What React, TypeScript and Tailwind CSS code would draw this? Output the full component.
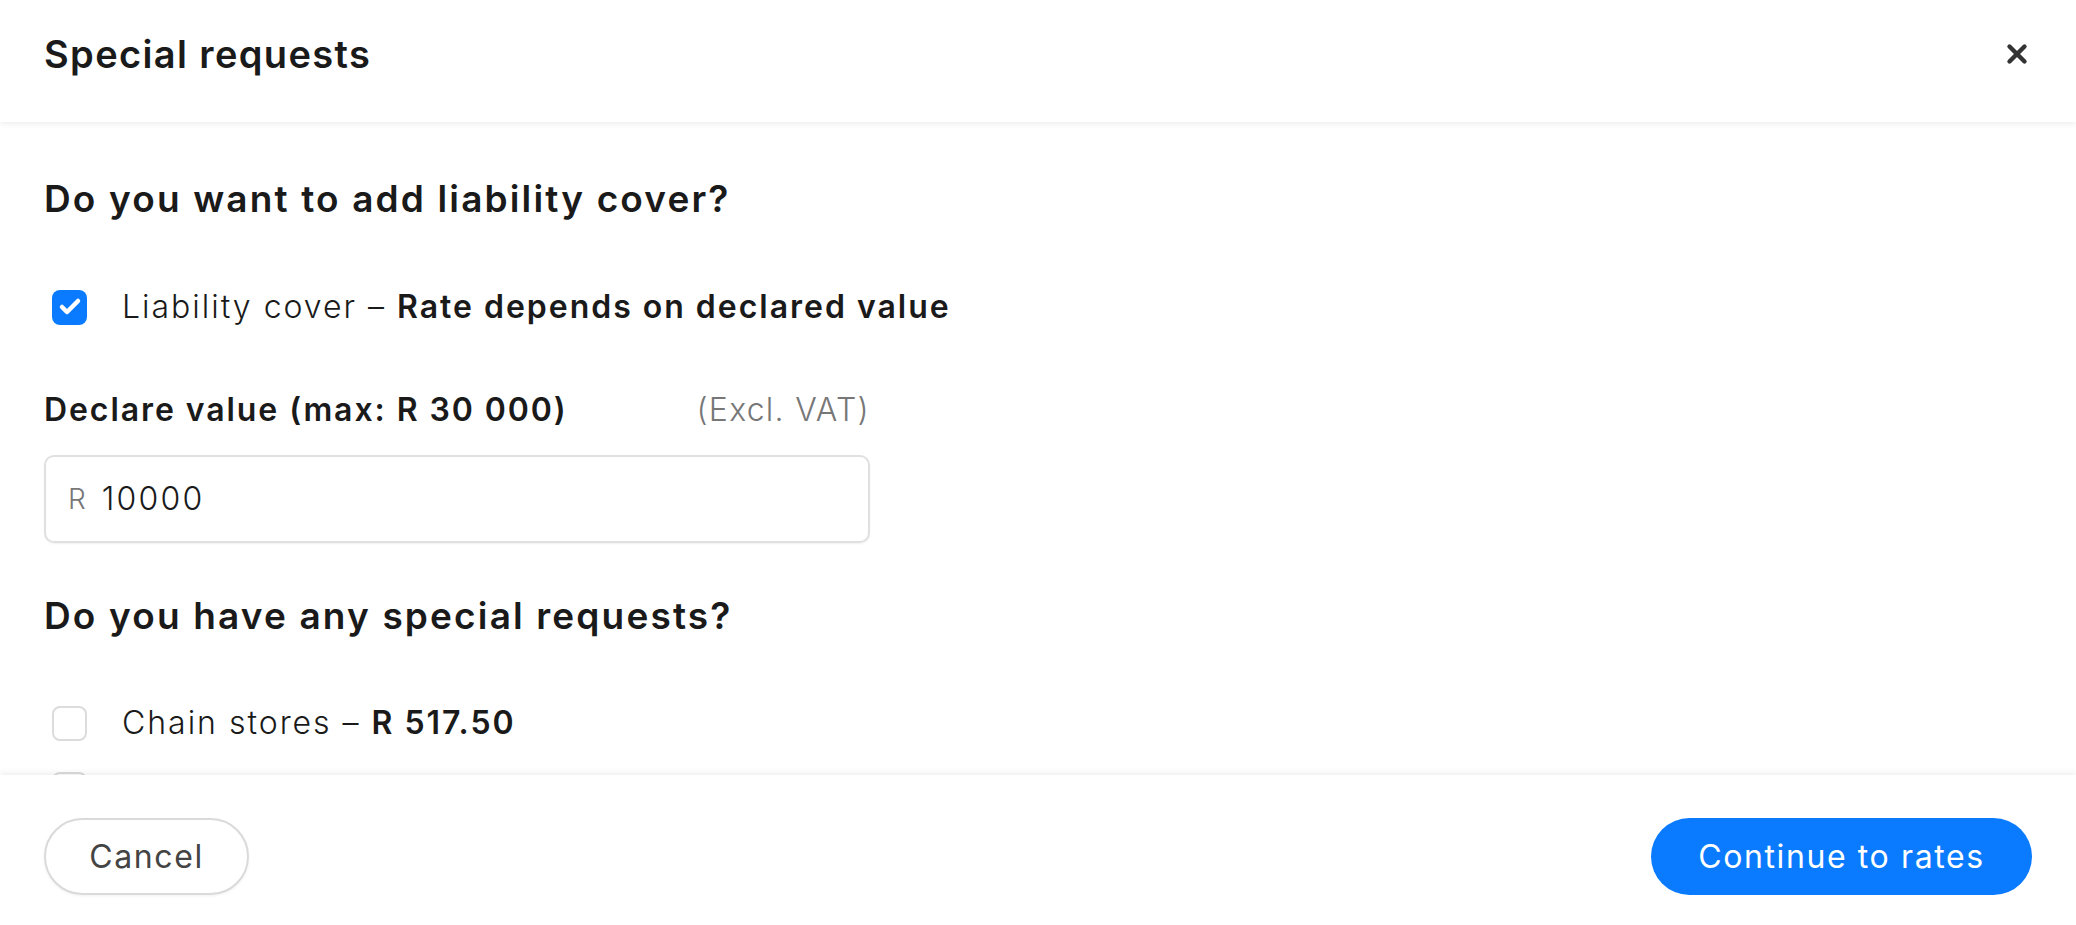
import React from 'react';
import { X, Check } from 'lucide-react';

const CheckRow = ({ checked, label, strong }: { checked?: boolean; label: string; strong: string }) => {
    return (
        <div className="flex items-center h-[44px] pl-[8px]">
            {checked ? (
                <div className="w-[35px] h-[35px] rounded-[8px] bg-[#0a7bff] flex items-center justify-center shrink-0">
                    <Check size={24} strokeWidth={4.5} className="text-white" />
                </div>
            ) : (
                <div className="w-[35px] h-[35px] rounded-[8px] border-2 border-[#dcdcdc] bg-white shrink-0" />
            )}
            <p className="ml-[35px] text-[32px] tracking-[0.062em] font-light text-[#1a1a1a] whitespace-nowrap">
                {label} – <span className="font-semibold">{strong}</span>
            </p>
        </div>
    );
};

const App = () => {
    return (
        <div className="h-[925px] w-full bg-white flex flex-col overflow-hidden font-['Inter',sans-serif] text-[#1a1a1a]">
            <div className="h-[122px] shrink-0 flex items-center justify-between px-[44px] pb-[14px] relative z-10 shadow-[0_2px_6px_rgba(0,0,0,0.07)]">
                <h1 className="text-[38px] tracking-[0.036em] font-semibold">Special requests</h1>
                <X size={30} strokeWidth={3.5} className="text-[#333]" />
            </div>

            <div className="flex-1 overflow-hidden px-[44px]">
                <h2 className="mt-[55px] h-[44px] leading-[44px] text-[37px] tracking-[0.058em] font-semibold">
                    Do you want to add liability cover?
                </h2>
                <div className="mt-[64px]">
                    <CheckRow checked label="Liability cover" strong="Rate depends on declared value" />
                </div>

                <div className="mt-[61px] w-[826px] h-[40px] flex items-center justify-between">
                    <span className="text-[32px] tracking-[0.06em] font-semibold">Declare value (max: R 30 000)</span>
                    <span className="text-[32px] tracking-[0.04em] font-light text-[#777]">(Excl. VAT)</span>
                </div>
                <div className="mt-[25px] w-[826px] h-[88px] rounded-[10px] border-2 border-[#e0e0e0] shadow-[0_1px_2px_rgba(0,0,0,0.06)] flex items-center px-[22px]">
                    <span className="text-[28px] font-light text-[#777]">R</span>
                    <span className="ml-[16px] text-[32px] tracking-[0.07em] font-light text-[#1a1a1a]">10000</span>
                </div>

                <h2 className="mt-[51px] h-[44px] leading-[44px] text-[37px] tracking-[0.058em] font-semibold">
                    Do you have any special requests?
                </h2>
                <div className="mt-[63px]">
                    <CheckRow label="Chain stores" strong="R 517.50" />
                </div>
                <div className="mt-[22px]">
                    <CheckRow label="Tail lift delivery" strong="R 345.00" />
                </div>
            </div>

            <div className="h-[150px] shrink-0 flex items-start justify-between px-[44px] pt-[43px] relative z-10 bg-white shadow-[0_-2px_6px_rgba(0,0,0,0.07)]">
                <button className="w-[205px] h-[77px] rounded-full border-2 border-[#dadada] bg-white text-[32px] tracking-[0.05em] font-normal text-[#444] shadow-[0_1px_3px_rgba(0,0,0,0.06)]">
                    Cancel
                </button>
                <button className="w-[381px] h-[77px] rounded-full bg-[#0a7bff] text-[32px] tracking-[0.05em] font-normal text-white">
                    Continue to rates
                </button>
            </div>
        </div>
    );
};

export default App;
